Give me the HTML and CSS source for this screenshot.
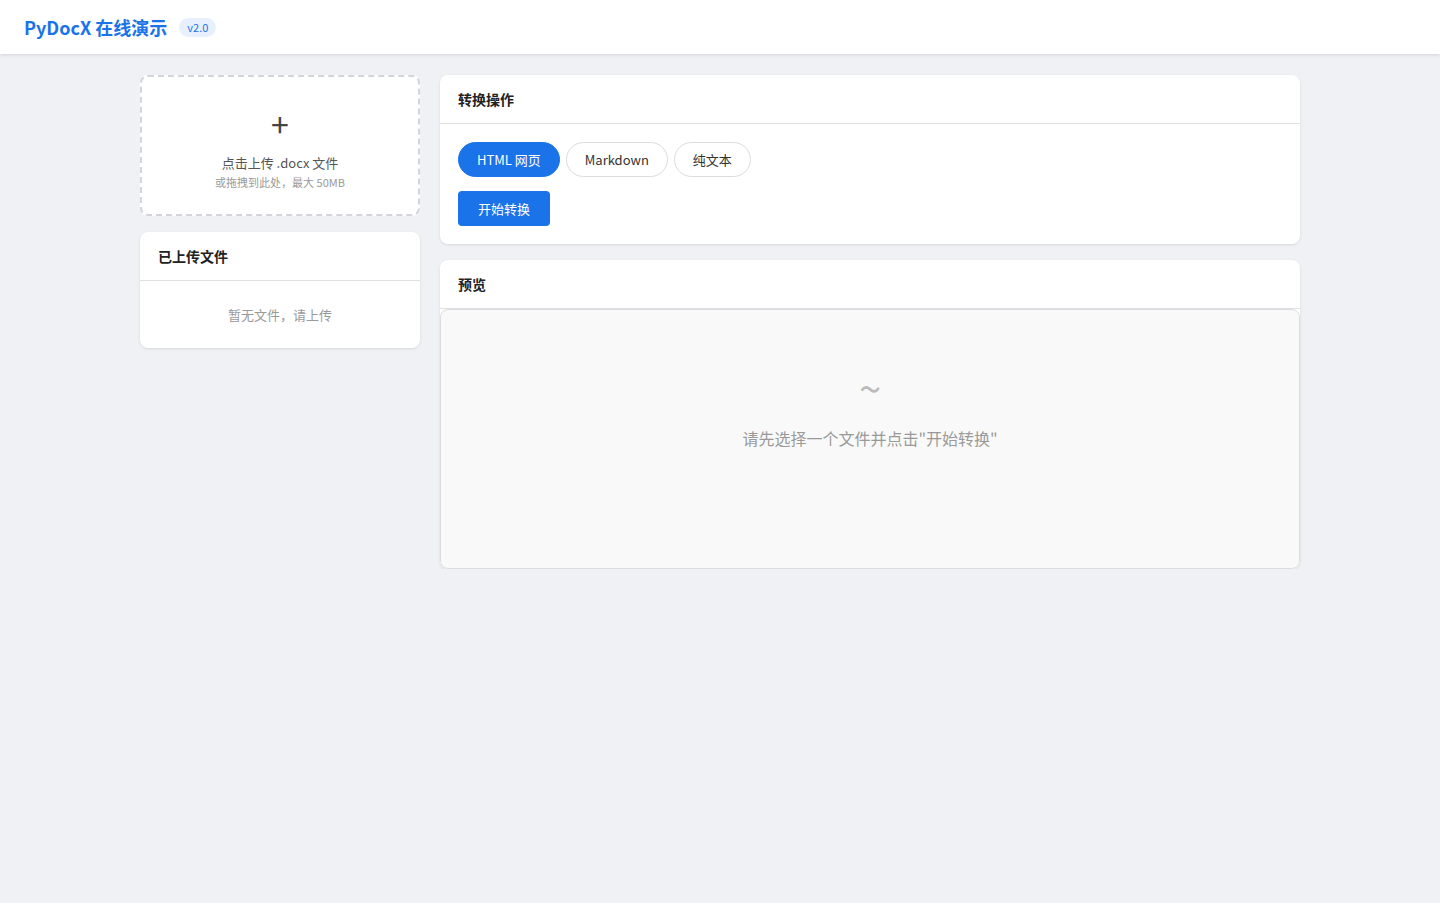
FILE: index.html
```html
<!DOCTYPE html>
<html>

<head>
    <meta charset="utf-8">
    <title>PyDocX 在线演示</title>
    <link rel="stylesheet" href="styles.css">
</head>

<body>
    <header class="topbar">
        <h1 class="brand">PyDocX 在线演示</h1>
        <span class="badge">v2.0</span>
    </header>

    <main class="layout">
        <aside class="side">
            <div class="upload">
                <div class="upload-plus">+</div>
                <p class="upload-main">点击上传 .docx 文件</p>
                <p class="upload-sub">或拖拽到此处，最大 50MB</p>
            </div>

            <section class="card">
                <h2 class="card-head">已上传文件</h2>
                <div class="files-empty">暂无文件，请上传</div>
            </section>
        </aside>

        <div class="content">
            <section class="card">
                <h2 class="card-head">转换操作</h2>
                <div class="card-body">
                    <div class="pills">
                        <button class="pill active">HTML 网页</button>
                        <button class="pill">Markdown</button>
                        <button class="pill">纯文本</button>
                    </div>
                    <button class="btn-primary">开始转换</button>
                </div>
            </section>

            <section class="card">
                <h2 class="card-head">预览</h2>
                <div class="preview">
                    <div class="preview-icon">~</div>
                    <p class="preview-text">请先选择一个文件并点击"开始转换"</p>
                </div>
            </section>
        </div>
    </main>
</body>

</html>
```

FILE: styles.css
```css
/* 기본 */
* {
    box-sizing: border-box;
}
body {
    margin: 0;
    background-color: #f0f1f5;
    font-family: "Noto Sans CJK SC", "Noto Sans", sans-serif;
    color: #222;
}
h1, h2, p {
    margin: 0;
}

/* 상단바 */
.topbar {
    display: flex;
    align-items: center;
    gap: 12px;
    height: 54px;
    padding: 0 24px;
    background-color: #fff;
    box-shadow: 0 1px 4px rgba(0, 0, 0, .12);
}
.brand {
    font-size: 18px;
    font-weight: 700;
    color: #1a73e8;
}
.badge {
    padding: 1px 8px;
    border-radius: 10px;
    background-color: #e8f0fe;
    color: #1a73e8;
    font-size: 11px;
    line-height: 17px;
}

/* 레이아웃 */
.layout {
    display: grid;
    grid-template-columns: 280px 1fr;
    gap: 20px;
    width: 1160px;
    margin: 21px auto 0;
    align-items: start;
}
.side,
.content {
    display: flex;
    flex-direction: column;
    gap: 16px;
}

/* 카드 */
.card {
    background-color: #fff;
    border-radius: 8px;
    box-shadow: 0 1px 3px rgba(0, 0, 0, .1);
    overflow: hidden;
}
.card-head {
    height: 49px;
    padding: 0 18px;
    border-bottom: 1px solid #e0e0e4;
    font-size: 14px;
    font-weight: 700;
    line-height: 48px;
}
.card-body {
    display: flex;
    flex-direction: column;
    align-items: flex-start;
    gap: 14px;
    padding: 18px;
}

/* 업로드 */
.upload {
    height: 141px;
    border: 2px dashed #d4d5db;
    border-radius: 8px;
    background-color: #fff;
    text-align: center;
    padding-top: 28px;
}
.upload-plus {
    font-size: 32px;
    line-height: 36px;
    color: #444;
}
.upload-main {
    margin-top: 13px;
    font-size: 13px;
    color: #555;
    line-height: 18px;
}
.upload-sub {
    margin-top: 2px;
    font-size: 11px;
    color: #999;
    line-height: 16px;
}

.files-empty {
    padding: 23px 0 23px;
    text-align: center;
    font-size: 13px;
    color: #999;
    line-height: 21px;
}

/* 버튼 */
.pills {
    display: flex;
    gap: 6px;
}
.pill {
    height: 35px;
    padding: 0 18px;
    border: 1px solid #dcdce0;
    border-radius: 18px;
    background-color: #fff;
    font-family: inherit;
    font-size: 13px;
    color: #333;
}
.pill.active {
    border-color: #1a73e8;
    background-color: #1a73e8;
    color: #fff;
}
.btn-primary {
    height: 35px;
    padding: 0 20px;
    border: 0;
    border-radius: 4px;
    background-color: #1a73e8;
    font-family: inherit;
    font-size: 13px;
    color: #fff;
}

/* 미리보기 */
.preview {
    height: 260px;
    border: 1px solid #dcdce0;
    border-radius: 8px;
    background-color: #f9f9fa;
    text-align: center;
    padding-top: 57px;
}
.preview-icon {
    font-size: 40px;
    line-height: 40px;
    color: #bbb;
}
.preview-text {
    margin-top: 19px;
    font-size: 16px;
    color: #999;
    line-height: 24px;
}
```
